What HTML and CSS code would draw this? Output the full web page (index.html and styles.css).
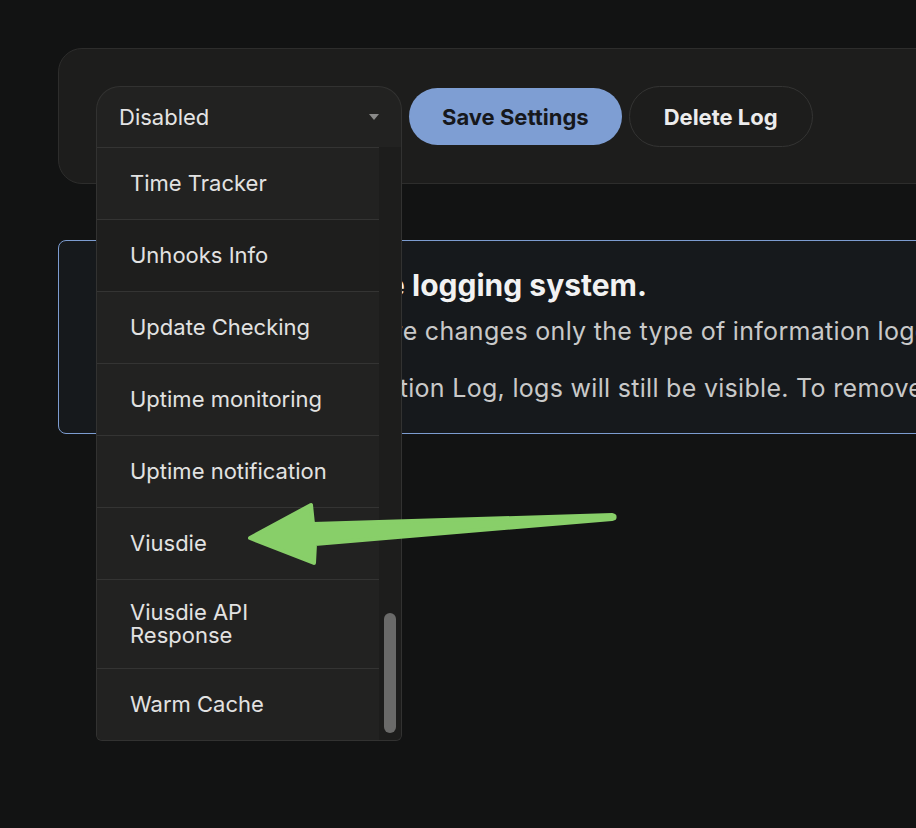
FILE: index.html
```html
<!DOCTYPE html>
<html lang="en">
<head>
<meta charset="utf-8">
<title>Logging settings</title>
<link rel="stylesheet" href="styles.css">
</head>
<body>
<div class="page">
  <section class="card">
    <div class="select">
      <div class="select-head">
        <span class="select-value">Disabled</span>
        <span class="caret"></span>
      </div>
      <div class="select-menu">
        <ul class="options">
          <li class="option">Time Tracker</li>
          <li class="option option-dim">Unhooks Info</li>
          <li class="option">Update Checking</li>
          <li class="option">Uptime monitoring</li>
          <li class="option">Uptime notification</li>
          <li class="option">Viusdie</li>
          <li class="option">Viusdie API Response</li>
          <li class="option">Warm Cache</li>
        </ul>
        <div class="scroll-track"><div class="scroll-thumb"></div></div>
      </div>
    </div>
    <button class="btn btn-primary">Save Settings</button>
    <button class="btn btn-outline">Delete Log</button>
  </section>

  <section class="notice">
    <h2 class="notice-title">How to configure the logging system.</h2>
    <p class="notice-text">The level you choose here changes only the type of information logged.</p>
    <p class="notice-text">When you disable the Action Log, logs will still be visible. To remove them, use Delete Log.</p>
  </section>
</div>

<svg class="arrow" width="916" height="828" viewBox="0 0 916 828" aria-hidden="true">
  <polygon points="250,538 311,505 313,524 612,515 612,519 315,544 314,563"
           fill="#88cf69" stroke="#88cf69" stroke-width="4" stroke-linejoin="round"/>
  <circle cx="613" cy="517" r="3.6" fill="#88cf69"/>
</svg>
</body>
</html>
```

FILE: styles.css
```css
* { box-sizing: border-box; }

html, body {
  margin: 0;
  padding: 0;
  background: #121313;
  overflow: hidden;
  width: 916px;
  height: 828px;
}

body {
  font-family: Inter, "Noto Sans", "Liberation Sans", sans-serif;
  color: #e6e6e6;
  position: relative;
}

.page {
  width: 1000px;
  padding: 48px 0 0 58px;
}

.card {
  display: flex;
  align-items: center;
  gap: 7px;
  background: #1d1d1c;
  border: 1px solid #2d2d2c;
  border-radius: 24px;
  padding: 37px 0 36px 37px;
}

.select {
  position: relative;
  width: 306px;
  z-index: 2;
}

.select-head {
  height: 61px;
  display: flex;
  align-items: center;
  justify-content: space-between;
  padding: 0 22px 0 22px;
  background: #222221;
  border: 1px solid #323231;
  border-bottom: none;
  border-radius: 24px 24px 0 0;
}

.select-value {
  font-size: 22px;
  color: #e4e4e4;
}

.caret {
  width: 0;
  height: 0;
  border-left: 5px solid transparent;
  border-right: 5px solid transparent;
  border-top: 6px solid #8a8a89;
}

.select-menu {
  position: absolute;
  top: 61px;
  left: 0;
  width: 306px;
  display: flex;
  background: #222221;
  border: 1px solid #323231;
  border-top: none;
  border-radius: 0 0 6px 6px;
  overflow: hidden;
}

.options {
  list-style: none;
  margin: 0;
  padding: 0;
  flex: 1;
}

.option {
  display: flex;
  align-items: center;
  min-height: 72px;
  padding: 21px 40px 21px 33px;
  border-top: 1px solid #343433;
  font-size: 22px;
  line-height: 23px;
  color: #e2e2e2;
  background: #222221;
}

.option-dim {
  background: #1e1e1d;
}

.scroll-track {
  width: 22px;
  background: #1d1d1c;
  padding: 466px 4px 7px 5px;
}

.scroll-thumb {
  width: 12px;
  height: 120px;
  border-radius: 6px;
  background: #6a6a69;
}

.btn {
  font-family: Inter, "Noto Sans", "Liberation Sans", sans-serif;
  font-size: 22px;
  font-weight: 700;
  border-radius: 999px;
  cursor: pointer;
}

.btn-primary {
  height: 57px;
  padding: 0 33px;
  background: #7e9ed3;
  color: #16181c;
  border: none;
}

.btn-outline {
  height: 61px;
  padding: 0 34px;
  background: #1d1d1c;
  color: #ececec;
  border: 1px solid #343433;
}

.notice {
  margin-top: 56px;
  background: #16191c;
  border: 1px solid #7c9cd0;
  border-radius: 8px;
  padding: 26px 0 31px 40px;
}

.notice-title {
  margin: 0 0 14px 0;
  font-size: 30px;
  line-height: 36px;
  font-weight: 700;
  color: #f2f2f2;
  white-space: nowrap;
}

.notice-text {
  margin: 0;
  font-size: 25px;
  line-height: 28px;
  letter-spacing: 0.3px;
  color: #c9c9c9;
  white-space: nowrap;
}

.notice-text + .notice-text {
  margin-top: 29px;
}

.arrow {
  position: absolute;
  left: 0;
  top: 0;
  pointer-events: none;
  z-index: 5;
}
```
